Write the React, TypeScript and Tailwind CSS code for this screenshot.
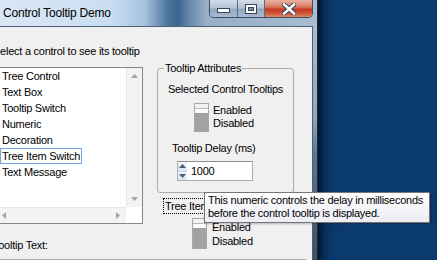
import React from "react";

const items = ["Tree Control", "Text Box", "Tooltip Switch", "Numeric", "Decoration", "Tree Item Switch", "Text Message"];

function Arrow({ dir, color = "#a3a3a3" }: { dir: "up" | "down" | "left" | "right"; color?: string }) {
  const pts = {
    up: "0,4 3.5,0 7,4",
    down: "0,0 3.5,4 7,0",
    left: "4,0 0,3.5 4,7",
    right: "0,0 4,3.5 0,7",
  }[dir];
  const vertical = dir === "up" || dir === "down";
  return (
    <svg width={vertical ? 7 : 4} height={vertical ? 4 : 7} viewBox={vertical ? "0 0 7 4" : "0 0 4 7"}>
      <polygon points={pts} fill={color} />
    </svg>
  );
}

function Toggle({ tall }: { tall?: boolean }) {
  return (
    <div className={`flex flex-col w-[15px] ${tall ? "h-[31px]" : "h-[29px]"} border border-[#a7a7a7] bg-[#f1f1f1]`}>
      <div className="h-[5px] border-b border-[#b9b9b9]" />
      <div className="h-[5px] bg-[#fbfbfb] border-b border-[#a0a0a0]" />
      <div className="flex-1 bg-[#a2a2a2]" />
    </div>
  );
}

function TitleButtons() {
  return (
    <div className="w-[104px] shrink-0 flex h-[18px] border-x border-b border-[#3b4e64] rounded-b-[5px] overflow-hidden">
      <div className="w-[28px] flex items-center justify-center border-r border-[#5a6e85] bg-[linear-gradient(180deg,#d3dde8_0%,#b4c3d4_45%,#95a8be_55%,#a9bbcf_100%)]">
        <div className="w-[13px] h-[5px] bg-white border border-[#33465b] mt-[3px]" />
      </div>
      <div className="w-[27px] flex items-center justify-center border-r border-[#5a6e85] bg-[linear-gradient(180deg,#d3dde8_0%,#b4c3d4_45%,#95a8be_55%,#a9bbcf_100%)]">
        <div className="w-[12px] h-[10px] border border-[#33465b] bg-white p-[2px]">
          <div className="w-full h-full bg-[#7d92a9] border border-[#33465b]" />
        </div>
      </div>
      <div className="flex-1 flex items-center justify-center bg-[linear-gradient(180deg,#eab3a3_0%,#dc7c64_40%,#c4391f_55%,#d2573b_80%,#e08a6c_100%)]">
        <svg width="14" height="12" viewBox="0 0 14 12">
          <path d="M2 1.5 L12 10.5 M12 1.5 L2 10.5" stroke="#33465b" strokeWidth="4.5" strokeLinecap="square" />
          <path d="M2 1.5 L12 10.5 M12 1.5 L2 10.5" stroke="#ffffff" strokeWidth="2.5" strokeLinecap="square" />
        </svg>
      </div>
    </div>
  );
}

function ListBox() {
  return (
    <div className="ml-[-5px] mt-[9px] w-[148px] h-[157px] border border-[#828790] bg-white flex flex-col">
      <div className="flex flex-1 min-h-0">
        <div className="flex-1 min-w-0 pl-[4px] flex flex-col">
          {items.map((it) => (
            <div key={it} className="h-[16px] flex items-center">
              <span
                className={`h-[16px] flex items-center px-[1px] border whitespace-nowrap ${
                  it === "Tree Item Switch" ? "border-[#6ea6e6]" : "border-transparent"
                }`}
              >
                {it}
              </span>
            </div>
          ))}
        </div>
        <div className="w-[16px] flex flex-col bg-[#f3f3f3] border-l border-[#e6e6e6]">
          <div className="h-[16px] flex items-center justify-center">
            <Arrow dir="up" />
          </div>
          <div className="flex-1" />
          <div className="h-[16px] flex items-center justify-center">
            <Arrow dir="down" />
          </div>
        </div>
      </div>
      <div className="flex h-[16px]">
        <div className="flex-1 flex items-center justify-between px-[6px] bg-[#f3f3f3] border-t border-[#e6e6e6]">
          <Arrow dir="left" />
          <Arrow dir="right" />
        </div>
        <div className="w-[16px] bg-white" />
      </div>
    </div>
  );
}

function Numeric() {
  return (
    <div className="ml-[19px] mt-[6px] w-[76px] h-[20px] border border-[#abadb3] border-t-[#8e8f8f] bg-white flex">
      <div className="w-[9px] flex flex-col">
        <div className="flex-1 flex items-center justify-center bg-[linear-gradient(180deg,#f2f6fb,#dbe5f1)] border-b border-[#c7d3e2]">
          <Arrow dir="up" color="#4a5d78" />
        </div>
        <div className="flex-1 flex items-center justify-center bg-[linear-gradient(180deg,#f2f6fb,#dbe5f1)]">
          <Arrow dir="down" color="#4a5d78" />
        </div>
      </div>
      <div className="pl-[4px] flex items-center">1000</div>
    </div>
  );
}

export default function App() {
  return (
    <div className="relative flex w-[437px] h-[260px] overflow-hidden bg-[#0b3a6f] text-black font-['Liberation_Sans',Arial,sans-serif]">
      {/* window */}
      <div className="w-[318px] shrink-0 flex flex-col border-r border-[#1b2939]">
        <div className="h-[26px] flex items-start justify-between pr-[4px] bg-[linear-gradient(90deg,#d9e7f5_0px,#cadef1_110px,#a7c3df_145px,#4c739b_168px,#3c6690_178px,#6f8fb0_192px,#97aec6_206px,#a9bcd0_317px)]">
          <span className="pl-[3px] mt-[6px] text-[12px] leading-[14px] tracking-[-0.2px]">Control Tooltip Demo</span>
          <TitleButtons />
        </div>
        <div className="flex flex-1 min-h-0 bg-[linear-gradient(180deg,#a9bcd0_0px,#8ea6bf_90px,#5a7490_130px,#3a506a_234px)]">
          <div className="w-[313px] h-full border-t border-r border-[#4d5f73] bg-[#f0f0f0] overflow-hidden text-[11px] leading-[13px] tracking-[-0.25px]">
            <div className="ml-[-7px] mt-[18px] whitespace-nowrap">Select a control to see its tooltip</div>
            <div className="flex items-start">
              <div className="flex flex-col">
                <ListBox />
                <div className="ml-[-7px] mt-[15px] whitespace-nowrap">Tooltip Text:</div>
              </div>
              <div className="ml-[14px] flex flex-col">
                <fieldset className="mt-[4px] w-[137px] h-[131px] border border-[#acacac] rounded-[3px]">
                  <legend className="ml-[6px] px-[1px]">Tooltip Attributes</legend>
                  <div className="mt-[8px] text-center">Selected Control Tooltips</div>
                  <div className="mt-[7px] ml-[36px] flex items-start">
                    <Toggle />
                    <div className="ml-[4px] mt-[1px]">
                      <div>Enabled</div>
                      <div>Disabled</div>
                    </div>
                  </div>
                  <div className="mt-[10px] ml-[14px]">Tooltip Delay (ms)</div>
                  <Numeric />
                </fieldset>
                <div className="mt-[5px] ml-[6px] flex">
                  <span className="h-[16px] flex items-center px-[1px] border border-dotted border-black whitespace-nowrap">
                    Tree Item Switch
                  </span>
                </div>
                <div className="mt-[4px] ml-[35px] flex items-start">
                  <Toggle tall />
                  <div className="ml-[5px] mt-[2px] leading-[14px]">
                    <div>Enabled</div>
                    <div>Disabled</div>
                  </div>
                </div>
              </div>
            </div>
            <div className="ml-[-3px] mt-[7px] w-[309px] h-[20px] border border-[#abadb3] bg-white" />
          </div>
        </div>
      </div>
      {/* desktop */}
      <div className="flex-1 bg-[linear-gradient(90deg,#03152b_0px,#062a52_5px,#0a3768_12px,#0b3a6f_22px,#0b3a6f_100%)]" />
      {/* tooltip */}
      <div className="absolute left-[204px] top-[192px] w-[226px] h-[31px] border border-[#767676] bg-[linear-gradient(180deg,#ffffff,#ecedf3)] shadow-[1px_1px_2px_rgba(0,0,0,0.25)] pl-[3px] pt-[1px] text-[11px] leading-[13px] tracking-[-0.25px] whitespace-nowrap">
        <div>This numeric controls the delay in milliseconds</div>
        <div>before the control tooltip is displayed.</div>
      </div>
    </div>
  );
}
